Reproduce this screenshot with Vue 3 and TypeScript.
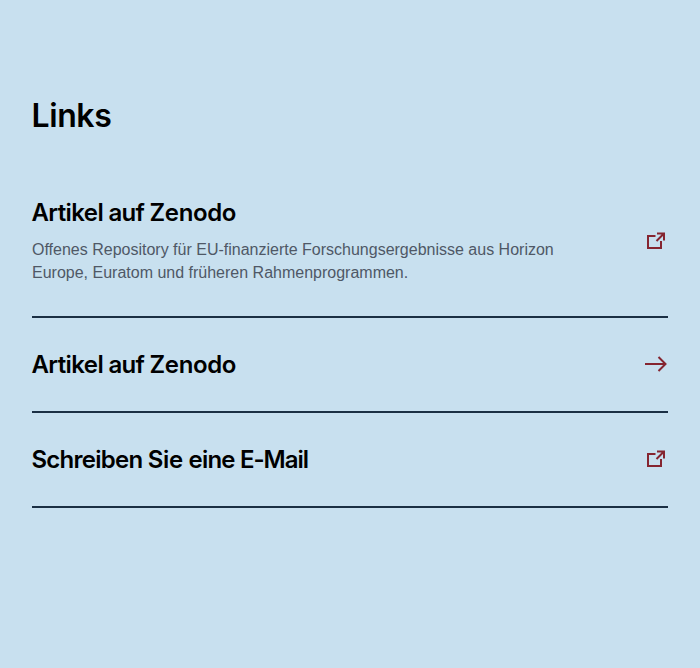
<script setup lang="ts">
interface Word {
  text: string
  tracking: number
}

interface LinkItem {
  title: Word[]
  text?: string
  external: boolean
}

const zenodo: Word[] = [
  { text: 'Artikel', tracking: -0.6 },
  { text: 'auf', tracking: -0.7 },
  { text: 'Zenodo', tracking: -0.4 },
]

const links: LinkItem[] = [
  {
    title: zenodo,
    text: 'Offenes Repository für EU-finanzierte Forschungsergebnisse aus Horizon Europe, Euratom und früheren Rahmenprogrammen.',
    external: true,
  },
  { title: zenodo, external: false },
  {
    title: [
      { text: 'Schreiben', tracking: -0.75 },
      { text: 'Sie', tracking: -0.3 },
      { text: 'eine', tracking: -0.8 },
      { text: 'E-Mail', tracking: -1.05 },
    ],
    external: true,
  },
]
</script>

<template>
  <section class="links">
    <h2 class="heading">Links</h2>
    <ul class="list">
      <li v-for="(link, i) in links" :key="i" class="item">
        <div class="content">
          <h3 class="title">
            <span v-for="word in link.title" :key="word.text" :style="{ letterSpacing: word.tracking + 'px' }">{{ word.text + ' ' }}</span>
          </h3>
          <p v-if="link.text" class="text">{{ link.text }}</p>
        </div>
        <svg v-if="link.external" class="icon" viewBox="0 0 24 24">
          <path d="M11.500 7H4v12h13v-7M13 4.500h7v7M20 4.500L12.500 12" />
        </svg>
        <svg v-else class="icon" viewBox="0 0 24 24">
          <path d="M1 12H21.500M14.500 5L21.500 12L14.500 19" />
        </svg>
      </li>
    </ul>
  </section>
</template>

<style>
body {
  background: #c8e0ef;
}
</style>

<style scoped>
.links {
  box-sizing: border-box;
  min-height: 668px;
  padding: 96px 32px;
  background: #c8e0ef;
  font-family: "Liberation Sans", Arial, sans-serif;
}
.heading {
  margin: 0 0 45px -0.5px;
  font: 600 32px/40px Inter, "Liberation Sans", sans-serif;
  letter-spacing: -0.4px;
}
.list {
  margin: 0;
  padding: 0;
  list-style: none;
}
.item {
  display: flex;
  align-items: center;
  justify-content: space-between;
  padding: 32px 0;
  border-bottom: 2px solid #1b3044;
}
.item:first-child {
  padding-top: 16px;
}
.title {
  margin: 0 0 0 -0.5px;
  font: 600 24px/29px Inter, "Liberation Sans", sans-serif;
  font-feature-settings: "calt" 0;
  white-space: pre-wrap;
}
.item:first-child .title {
  padding-top: 1px;
  margin-bottom: -1px;
}
.text {
  width: 556px;
  margin: 12px 0 0;
  font-size: 16px;
  line-height: 23px;
  color: #4f5866;
}
.icon {
  width: 24px;
  height: 24px;
  flex: none;
  fill: none;
  stroke: #852530;
  stroke-width: 2;
}
.item:not(:first-child) .icon {
  margin-top: -1px;
  margin-bottom: 1px;
}
</style>
